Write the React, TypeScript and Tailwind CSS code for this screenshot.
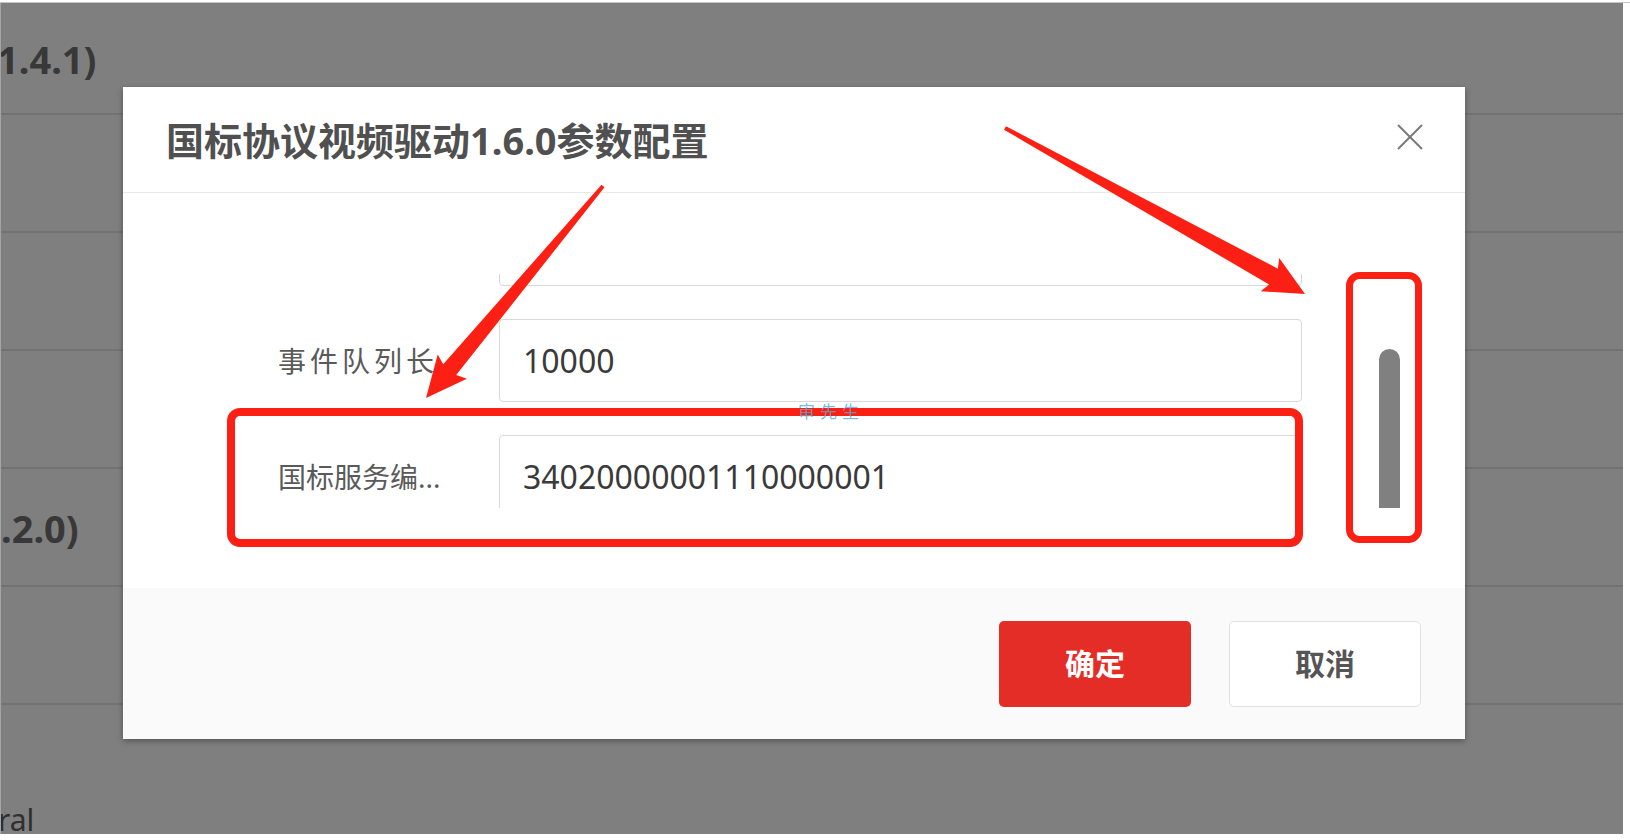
import React from "react";

type Pt = [number, number];

// tapered arrow (annotation) polygon, tail is thin, head is a barb at the tip
function arrowPoints(tail: Pt, tip: Pt, headLen: number, headHalf: number, shaftHalf: number, tailHalf: number) {
  const dx = tip[0] - tail[0];
  const dy = tip[1] - tail[1];
  const len = Math.hypot(dx, dy);
  const ux = dx / len;
  const uy = dy / len;
  const nx = -uy;
  const ny = ux;
  const bx = tip[0] - ux * headLen;
  const by = tip[1] - uy * headLen;
  const pts: Pt[] = [
    [tail[0] + nx * tailHalf, tail[1] + ny * tailHalf],
    [bx + nx * shaftHalf, by + ny * shaftHalf],
    [bx + nx * headHalf - ux * 4, by + ny * headHalf - uy * 4],
    tip,
    [bx - nx * headHalf - ux * 4, by - ny * headHalf - uy * 4],
    [bx - nx * shaftHalf, by - ny * shaftHalf],
    [tail[0] - nx * tailHalf, tail[1] - ny * tailHalf],
  ];
  return pts.map((p) => `${p[0].toFixed(1)},${p[1].toFixed(1)}`).join(" ");
}

// first row is scrolled almost out of view, only its bottom edge shows
const rows = [
  { key: "sip", label: "", value: "", wide: false },
  { key: "queue", label: "事件队列长", value: "10000", wide: true },
  { key: "gbid", label: "国标服务编...", value: "34020000001110000001", wide: false },
];

function FormRow({ label, value, wide }: { label: string; value: string; wide: boolean }) {
  return (
    <div className="flex items-center">
      <span className={`w-[221px] shrink-0 text-[28px] text-[#5a5a5a] ${wide ? "tracking-[4px]" : ""}`}>{label}</span>
      <input
        readOnly
        value={value}
        className="h-[83px] w-[803px] shrink-0 rounded-[4px] border border-[#d9d9d9] bg-white px-[23px] text-[32px] text-[#3a3a3a] outline-none"
      />
    </div>
  );
}

function Dialog() {
  return (
    <div className="absolute left-[122px] top-[84px] flex h-[652px] w-[1342px] flex-col bg-white shadow-[0_2px_6px_rgba(0,0,0,0.35)]">
      <div className="flex h-[106px] shrink-0 items-center justify-between border-b border-[#e9e9e9] pl-[43px] pr-[42px]">
        <h2 className="text-[38px] font-bold leading-none text-[#505050]">国标协议视频驱动1.6.0参数配置</h2>
        <button className="-mt-[5px] h-[26px] w-[26px]">
          <svg width="26" height="26" viewBox="0 0 26 26" fill="none" stroke="#7a7a7a" strokeWidth="2">
            <path d="M1 1 25 25" />
            <path d="M25 1 1 25" />
          </svg>
        </button>
      </div>

      <div className="flex h-[395px] shrink-0 pb-[80px] pl-[155px] pr-[65px] pt-[81px]">
        <div className="h-[234px] flex-1 overflow-hidden">
          <div className="-mt-[71px] flex flex-col gap-[33px]">
            {rows.map((r) => (
              <FormRow key={r.key} label={r.label} value={r.value} wide={r.wide} />
            ))}
          </div>
        </div>
        <div className="flex h-[234px] w-[21px] flex-col justify-end">
          <div className="h-[159px] rounded-t-full bg-[#808080]" />
        </div>
      </div>

      <div className="flex flex-1 items-center justify-end gap-[38px] bg-[#fafafa] pr-[44px]">
        <button className="h-[86px] w-[192px] rounded-[5px] bg-[#e52d27] text-[30px] font-bold text-white">确定</button>
        <button className="h-[86px] w-[192px] rounded-[5px] border border-[#e0e0e0] bg-white text-[30px] font-bold text-[#555555]">
          取消
        </button>
      </div>
    </div>
  );
}

function BackgroundPage() {
  const line = <div className="h-[2px] bg-[#e4e4e4]" />;
  return (
    <div className="flex h-full flex-col bg-white">
      <div className="h-[110px] overflow-hidden pt-[33px]">
        <span className="-ml-[4px] block text-[38px] font-bold leading-[46px] text-[#707070]">1.4.1)</span>
      </div>
      {line}
      <div className="h-[116px]" />
      {line}
      <div className="h-[116px]" />
      {line}
      <div className="h-[116px]" />
      {line}
      <div className="h-[116px] overflow-hidden pt-[36px]">
        <span className="block text-[38px] font-bold leading-[46px] text-[#707070]">.2.0)</span>
      </div>
      {line}
      <div className="h-[116px]" />
      {line}
      <div className="flex-1 overflow-hidden pt-[98px]">
        <span className="-ml-[3px] block text-[30px] leading-[34px] text-[#606060]">ral</span>
      </div>
    </div>
  );
}

export default function App() {
  const arrowA = arrowPoints([603, 186], [426, 398], 37, 19, 8.5, 2);
  const arrowB = arrowPoints([1005, 128], [1305, 294], 36, 19, 9, 2);

  return (
    <div className="relative h-[840px] w-[1630px] overflow-hidden bg-white font-['Noto_Sans','Noto_Sans_CJK_SC',sans-serif]">
      <div className="h-[3px] border-b border-[#c4c4c4] bg-white" />
      <div className="flex">
        <div className="relative h-[831px] w-[1623px] overflow-hidden border-l border-[#a4a4a4]">
          <BackgroundPage />
          <div className="absolute inset-0 bg-black/50" />
          <Dialog />
        </div>
      </div>

      <svg className="pointer-events-none absolute left-0 top-0" width="1630" height="840" viewBox="0 0 1630 840">
        <rect x="231" y="412" width="1068" height="131" rx="9" fill="none" stroke="#fb2013" strokeWidth="8" />
        <rect x="1349.5" y="275.5" width="69" height="264" rx="10" fill="none" stroke="#fb2013" strokeWidth="7" />
        <polygon points={arrowA} fill="#fb2013" />
        <polygon points={arrowB} fill="#fb2013" />
      </svg>

      <span className="pointer-events-none absolute left-[798px] top-[399px] text-[17px] tracking-[5px] text-[#5aa9d6]/80">
        审先生
      </span>
    </div>
  );
}
